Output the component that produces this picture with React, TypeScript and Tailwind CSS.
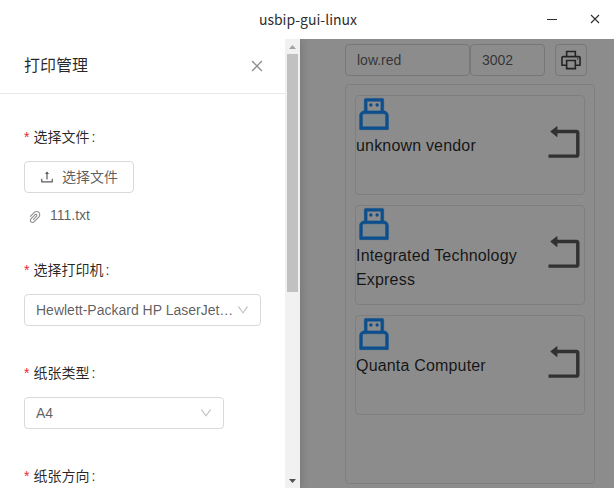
import type { ReactNode } from "react";
import {
  AiOutlineClose,
  AiOutlineDown,
  AiOutlinePaperClip,
  AiOutlinePrinter,
  AiOutlineRollback,
  AiOutlineUpload,
} from "react-icons/ai";

const devices = ["unknown vendor", "Integrated Technology Express", "Quanta Computer"];

function UsbIcon() {
  return (
    <svg viewBox="0 0 1024 1024" className="-ml-[2px] -mt-[2.5px] block size-10 shrink-0">
      <path fill="#e6f7ff" d="M759.9 504H264.1c-26.5 0-48.1 19.7-48.1 44v292h592V548c0-24.3-21.6-44-48.1-44z" />
      <path
        fill="#1890ff"
        stroke="#1890ff"
        strokeWidth="14"
        d="M456 248h-48c-4.4 0-8 3.6-8 8v48c0 4.4 3.6 8 8 8h48c4.4 0 8-3.6 8-8v-48c0-4.4-3.6-8-8-8zm160 0h-48c-4.4 0-8 3.6-8 8v48c0 4.4 3.6 8 8 8h48c4.4 0 8-3.6 8-8v-48c0-4.4-3.6-8-8-8z"
      />
      <path
        fill="#1890ff"
        stroke="#1890ff"
        strokeWidth="14"
        d="M760 432V144c0-17.7-14.3-32-32-32H296c-17.7 0-32 14.3-32 32v288c-66.2 0-120 52.1-120 116v356c0 4.4 3.6 8 8 8h720c4.4 0 8-3.6 8-8V548c0-63.9-53.8-116-120-116zM336 184h352v248H336V184zm472 656H216V548c0-24.3 21.6-44 48.1-44h495.8c26.5 0 48.1 19.7 48.1 44v292z"
      />
    </svg>
  );
}

function DeviceCard({ name }: { name: string }) {
  return (
    <div className="flex h-[100px] items-center justify-between rounded border border-[#e8e8e8]">
      <div className="h-full w-[185px] text-base leading-6 tracking-[0.18px] text-black/85">
        <UsbIcon />
        {name}
      </div>
      <AiOutlineRollback className="-mr-[3px] -mt-[7px] size-[46px] shrink-0 text-black/65" />
    </div>
  );
}

function Field({ label, children }: { label: string; children: ReactNode }) {
  return (
    <div className="mb-6">
      <div className="flex h-[39px] items-center text-black/85">
        <span className="mr-1 w-[5.5px] text-[#f5222d]">*</span>
        {label}
        <span className="ml-0.5">:</span>
      </div>
      {children}
    </div>
  );
}

function Select({ value, className }: { value: string; className: string }) {
  return (
    <div className="flex h-10 items-center pt-0.5">
      <div className={`flex h-8 items-center rounded border border-[#d9d9d9] pl-[11px] pr-2.5 ${className}`}>
        <span className="min-w-0 flex-1 truncate">{value}</span>
        <AiOutlineDown className="ml-0.5 size-3.5 shrink-0 text-black/25" />
      </div>
    </div>
  );
}

export default function App() {
  return (
    <div className="flex h-[488px] w-[614px] flex-col overflow-hidden bg-white font-['Liberation_Sans','Noto_Sans_CJK_SC',sans-serif] text-sm text-black/65">
      <header className="grid h-[39px] shrink-0 grid-cols-[1fr_auto_1fr] items-center font-['Noto_Sans_CJK_SC',sans-serif] text-[#2e2e2e]">
        <span />
        <h1 className="mb-0.5 ml-0.5 text-sm">usbip-gui-linux</h1>
        <div className="flex items-center justify-end gap-[33px] pr-3.5">
          <span className="mb-px h-px w-2.5 bg-[#2e2e2e]" />
          <svg viewBox="0 0 10 10" className="mb-px size-2.5" stroke="#2e2e2e" strokeWidth="1.1">
            <path d="M1 1l8 8M9 1L1 9" />
          </svg>
        </div>
      </header>

      <div className="relative flex h-[449px] overflow-hidden">
        <main className="ml-[345px] flex w-[250px] flex-col pt-[5px]">
          <div className="flex">
            <div className="flex h-8 w-[125px] items-center rounded border border-[#d9d9d9] px-[11px]">low.red</div>
            <div className="flex h-8 w-[75px] items-center rounded border border-[#d9d9d9] px-[11px]">3002</div>
            <button className="ml-2.5 flex size-8 items-center justify-center rounded border border-[#d9d9d9]">
              <AiOutlinePrinter className="size-6 shrink-0 text-black/75" />
            </button>
          </div>
          <div className="mt-2 flex h-[400px] flex-col gap-2.5 rounded border border-[#e8e8e8] px-[9px] pt-2.5">
            {devices.map((name) => (
              <DeviceCard key={name} name={name} />
            ))}
          </div>
        </main>

        <div className="absolute inset-0 bg-black/45" />

        <aside className="absolute inset-y-0 left-0 flex w-[300px] bg-white shadow-[2px_0_8px_rgba(0,0,0,0.15)]">
          <div className="w-[285px] overflow-hidden">
            <div className="flex h-[55px] items-center justify-between border-b border-[#e8e8e8] pl-6 pr-5">
              <h2 className="text-base leading-[22px] text-black/85">打印管理</h2>
              <AiOutlineClose className="size-4 text-black/45" />
            </div>
            <form className="px-6 pt-[23px]">
              <Field label="选择文件">
                <div className="flex h-[41px] items-center pt-px">
                  <button type="button" className="flex h-8 w-[110px] items-center rounded border border-[#d9d9d9] pl-3.5">
                    <AiOutlineUpload className="mr-[7px] size-4" />
                    选择文件
                  </button>
                </div>
                <div className="mt-[7px] flex h-[22px] items-center pl-[3px]">
                  <AiOutlinePaperClip className="mr-[7px] mt-[3px] size-4 text-black/45" />
                  111.txt
                </div>
              </Field>
              <Field label="选择打印机">
                <Select value="Hewlett-Packard HP LaserJet…" className="w-[237px]" />
              </Field>
              <Field label="纸张类型">
                <Select value="A4" className="w-[200px]" />
              </Field>
              <Field label="纸张方向">
                <Select value="" className="w-[200px]" />
              </Field>
            </form>
          </div>
          <div className="flex w-[15px] flex-col items-center justify-between bg-[#f1f1f1]">
            <div className="flex flex-col items-center">
              <svg viewBox="0 0 15 15" className="size-[15px]">
                <path fill="#a3a3a3" d="M4 10h7L7.5 6z" />
              </svg>
              <div className="h-[238px] w-[11px] bg-[#c1c1c1]" />
            </div>
            <svg viewBox="0 0 15 15" className="size-[15px]">
              <path fill="#505050" d="M4 6h7L7.5 10z" />
            </svg>
          </div>
        </aside>
      </div>
    </div>
  );
}
